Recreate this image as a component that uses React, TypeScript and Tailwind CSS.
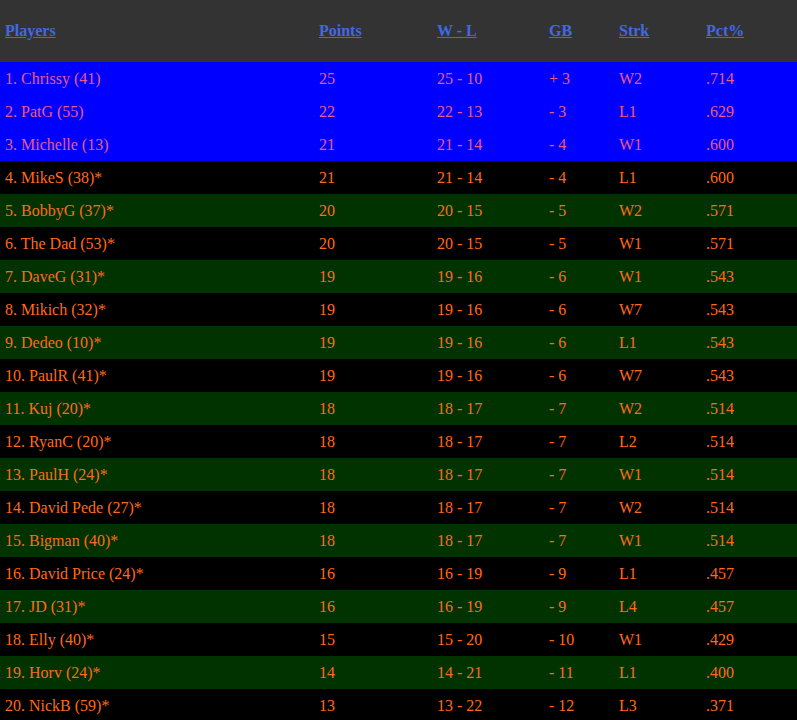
const rows: [string, string, string, string, string, string][] = [
["1. Chrissy (41)","25","25 - 10","+ 3","W2",".714"],
["2. PatG (55)","22","22 - 13","- 3","L1",".629"],
["3. Michelle (13)","21","21 - 14","- 4","W1",".600"],
["4. MikeS (38)*","21","21 - 14","- 4","L1",".600"],
["5. BobbyG (37)*","20","20 - 15","- 5","W2",".571"],
["6. The Dad (53)*","20","20 - 15","- 5","W1",".571"],
["7. DaveG (31)*","19","19 - 16","- 6","W1",".543"],
["8. Mikich (32)*","19","19 - 16","- 6","W7",".543"],
["9. Dedeo (10)*","19","19 - 16","- 6","L1",".543"],
["10. PaulR (41)*","19","19 - 16","- 6","W7",".543"],
["11. Kuj (20)*","18","18 - 17","- 7","W2",".514"],
["12. RyanC (20)*","18","18 - 17","- 7","L2",".514"],
["13. PaulH (24)*","18","18 - 17","- 7","W1",".514"],
["14. David Pede (27)*","18","18 - 17","- 7","W2",".514"],
["15. Bigman (40)*","18","18 - 17","- 7","W1",".514"],
["16. David Price (24)*","16","16 - 19","- 9","L1",".457"],
["17. JD (31)*","16","16 - 19","- 9","L4",".457"],
["18. Elly (40)*","15","15 - 20","- 10","W1",".429"],
["19. Horv (24)*","14","14 - 21","- 11","L1",".400"],
["20. NickB (59)*","13","13 - 22","- 12","L3",".371"],
];
const cols = "grid grid-cols-[314px_118px_112px_70px_87px_1fr] px-[5px]";
export default function App() {
  return (
    <div className="w-[797px] h-[720px] overflow-hidden bg-black text-[16px]" style={{fontFamily:'"Liberation Serif", serif'}}>
      <div className={`${cols} h-[62px] items-center bg-[#333333] font-bold text-[#4169e1] underline`}>
        {["Players","Points","W - L","GB","Strk","Pct%"].map(h=><div key={h}>{h}</div>)}
      </div>
      {rows.map((r,i)=>{
        const bg = i<3 ? "bg-[#0000ff] text-[#e85a8c]" : i%2===1 ? "bg-black text-[#ff6a1a]" : "bg-[#003300] text-[#ff6a1a]";
        return <div key={i} className={`${cols} h-[33px] items-center ${bg}`}>{r.map((c,j)=><div key={j}>{c}</div>)}</div>;
      })}
    </div>
  );
}
